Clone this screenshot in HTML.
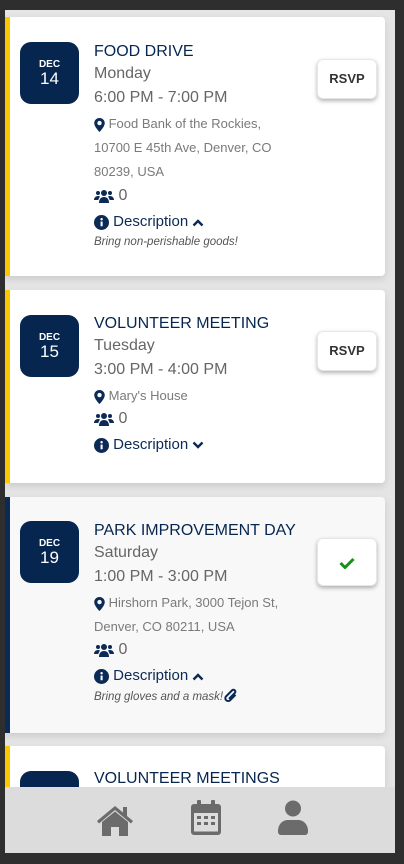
<!DOCTYPE html>
<html><head><meta charset="utf-8"><style>
*{margin:0;padding:0;box-sizing:border-box}
body{width:404px;height:864px;background:#2e2e2e;font-family:"Liberation Sans",sans-serif;position:relative;overflow:hidden}
#app{position:absolute;left:5px;top:10px;width:390px;height:843px;background:#e5e5e5;overflow:hidden}
.card{position:absolute;left:0;width:380px;background:#fff;border-radius:0 4px 4px 0;border-left:5px solid #fcc800;box-shadow:0 3px 8px rgba(0,0,0,.12)}
.card.navy{border-left-color:#0b2a55;background:#f8f8f8}
.date{position:absolute;left:10px;width:59px;height:62px;background:#062650;border-radius:11px;color:#fff;text-align:center}
.date .m{position:absolute;top:17px;width:100%;font-size:10px;font-weight:bold}
.date .d{position:absolute;top:27px;width:100%;font-size:17px}
.t{position:absolute;left:84px;white-space:nowrap;line-height:20px}
.title{font-size:16px;color:#062650}
.day,.time{font-size:16px;color:#666}
.addr{font-size:13px;color:#7a7a7a}
.cnt{font-size:16px;color:#666}
.desc{font-size:15px;color:#0b2a55}
.note{font-size:11.5px;font-style:italic;color:#555}
.btn{position:absolute;left:307px;width:60px;background:#fff;border-radius:6px;box-shadow:0 2px 4px rgba(0,0,0,.3);border:1px solid #e6e6e6;text-align:center;font-weight:bold;font-size:13px;color:#333}
svg{vertical-align:middle}
#nav{position:absolute;left:0;top:777px;width:390px;height:66px;background:#dcdcdc}
</style></head><body><div id="app">

<div class="card" style="top:7px;height:259px">
 <div class="date" style="top:25px"><div class="m">DEC</div><div class="d">14</div></div>
 <div class="t title" style="top:25px">FOOD DRIVE</div>
 <div class="t day" style="top:47px">Monday</div>
 <div class="t time" style="top:71px">6:00 PM - 7:00 PM</div>
 <div class="t addr" style="top:97px"><svg width="11" height="14" viewBox="0 0 12 16"><path d="M6 0C2.7 0 0 2.6 0 5.8 0 10 6 16 6 16s6-6 6-10.2C12 2.6 9.3 0 6 0zm0 8.3A2.5 2.5 0 1 1 6 3.3a2.5 2.5 0 0 1 0 5z" fill="#0b2a55"/></svg> Food Bank of the Rockies,</div>
 <div class="t addr" style="top:121px">10700 E 45th Ave, Denver, CO</div>
 <div class="t addr" style="top:145px">80239, USA</div>
 <div class="t cnt" style="top:169px"><svg width="20" height="14" viewBox="0 0 20 14" fill="#0b2a55"><circle cx="10" cy="4" r="3"/><circle cx="4" cy="4" r="2"/><circle cx="16" cy="4" r="2"/><path d="M5 14c0-4 2-6 5-6s5 2 5 6z"/><path d="M0 11c0-2 1.5-4 4-4 1 0 1.5.3 2 .7C5 9 4.5 10 4.3 11z"/><path d="M20 11c0-2-1.5-4-4-4-1 0-1.5.3-2 .7 1 1.3 1.5 2.3 1.7 3.3z"/></svg> 0</div>
 <div class="t desc" style="top:195px"><svg width="15" height="15" viewBox="0 0 16 16"><circle cx="8" cy="8" r="8" fill="#0b2a55"/><rect x="7" y="7" width="2.2" height="5" fill="#fff"/><circle cx="8.1" cy="4.5" r="1.3" fill="#fff"/></svg> Description <svg width="12" height="9" viewBox="0 0 12 9"><path d="M1.5 7.5L6 3l4.5 4.5" stroke="#0b2a55" stroke-width="2.4" fill="none"/></svg></div>
 <div class="t note" style="top:215px">Bring non-perishable goods!</div>
 <div class="btn" style="top:42px;height:40px;line-height:38px">RSVP</div>
</div>

<div class="card" style="top:280px;height:193px">
 <div class="date" style="top:25px"><div class="m">DEC</div><div class="d">15</div></div>
 <div class="t title" style="top:24px">VOLUNTEER MEETING</div>
 <div class="t day" style="top:46px">Tuesday</div>
 <div class="t time" style="top:70px">3:00 PM - 4:00 PM</div>
 <div class="t addr" style="top:96px"><svg width="11" height="14" viewBox="0 0 12 16"><path d="M6 0C2.7 0 0 2.6 0 5.8 0 10 6 16 6 16s6-6 6-10.2C12 2.6 9.3 0 6 0zm0 8.3A2.5 2.5 0 1 1 6 3.3a2.5 2.5 0 0 1 0 5z" fill="#0b2a55"/></svg> Mary's House</div>
 <div class="t cnt" style="top:119px"><svg width="20" height="14" viewBox="0 0 20 14" fill="#0b2a55"><circle cx="10" cy="4" r="3"/><circle cx="4" cy="4" r="2"/><circle cx="16" cy="4" r="2"/><path d="M5 14c0-4 2-6 5-6s5 2 5 6z"/><path d="M0 11c0-2 1.5-4 4-4 1 0 1.5.3 2 .7C5 9 4.5 10 4.3 11z"/><path d="M20 11c0-2-1.5-4-4-4-1 0-1.5.3-2 .7 1 1.3 1.5 2.3 1.7 3.3z"/></svg> 0</div>
 <div class="t desc" style="top:145px"><svg width="15" height="15" viewBox="0 0 16 16"><circle cx="8" cy="8" r="8" fill="#0b2a55"/><rect x="7" y="7" width="2.2" height="5" fill="#fff"/><circle cx="8.1" cy="4.5" r="1.3" fill="#fff"/></svg> Description <svg width="12" height="9" viewBox="0 0 12 9"><path d="M1.5 1.5L6 6l4.5-4.5" stroke="#0b2a55" stroke-width="2.4" fill="none"/></svg></div>
 <div class="btn" style="top:41px;height:40px;line-height:38px">RSVP</div>
</div>

<div class="card navy" style="top:487px;height:236px">
 <div class="date" style="top:24px"><div class="m">DEC</div><div class="d">19</div></div>
 <div class="t title" style="top:24px">PARK IMPROVEMENT DAY</div>
 <div class="t day" style="top:46px">Saturday</div>
 <div class="t time" style="top:70px">1:00 PM - 3:00 PM</div>
 <div class="t addr" style="top:96px"><svg width="11" height="14" viewBox="0 0 12 16"><path d="M6 0C2.7 0 0 2.6 0 5.8 0 10 6 16 6 16s6-6 6-10.2C12 2.6 9.3 0 6 0zm0 8.3A2.5 2.5 0 1 1 6 3.3a2.5 2.5 0 0 1 0 5z" fill="#0b2a55"/></svg> Hirshorn Park, 3000 Tejon St,</div>
 <div class="t addr" style="top:120px">Denver, CO 80211, USA</div>
 <div class="t cnt" style="top:143px"><svg width="20" height="14" viewBox="0 0 20 14" fill="#0b2a55"><circle cx="10" cy="4" r="3"/><circle cx="4" cy="4" r="2"/><circle cx="16" cy="4" r="2"/><path d="M5 14c0-4 2-6 5-6s5 2 5 6z"/><path d="M0 11c0-2 1.5-4 4-4 1 0 1.5.3 2 .7C5 9 4.5 10 4.3 11z"/><path d="M20 11c0-2-1.5-4-4-4-1 0-1.5.3-2 .7 1 1.3 1.5 2.3 1.7 3.3z"/></svg> 0</div>
 <div class="t desc" style="top:169px"><svg width="15" height="15" viewBox="0 0 16 16"><circle cx="8" cy="8" r="8" fill="#0b2a55"/><rect x="7" y="7" width="2.2" height="5" fill="#fff"/><circle cx="8.1" cy="4.5" r="1.3" fill="#fff"/></svg> Description <svg width="12" height="9" viewBox="0 0 12 9"><path d="M1.5 7.5L6 3l4.5 4.5" stroke="#0b2a55" stroke-width="2.4" fill="none"/></svg></div>
 <div class="t note" style="top:190px">Bring gloves and a mask!<svg width="16" height="17" viewBox="0 0 14 15"><path d="M11 6L6 11a2.5 2.5 0 0 1-3.5-3.5L8 2a1.7 1.7 0 0 1 2.4 2.4L5.2 9.6" stroke="#0b2a55" stroke-width="1.8" fill="none"/></svg></div>
 <div class="btn" style="top:41px;height:48px;line-height:46px"><svg width="16" height="12" viewBox="0 0 16 12"><path d="M1.5 6l4.5 4.5L14.5 2" stroke="#1a8f1a" stroke-width="3" fill="none"/></svg></div>
</div>

<div class="card" style="top:736px;height:120px">
 <div class="date" style="top:25px"></div>
 <div class="t title" style="top:23px">VOLUNTEER MEETINGS</div>
</div>

<div id="nav">
 <svg style="position:absolute;left:91px;top:16px" width="38" height="33" viewBox="0 0 38 33" fill="#6b6b6b"><path d="M19 3L1 18l2 2.5L19 7l16 13.5 2-2.5-6-5V4h-4v5.5z"/><path d="M6 19L19 8.5 32 19v14H23v-9h-8v9H6z"/></svg>
 <svg style="position:absolute;left:186px;top:13px" width="30" height="35" viewBox="0 0 30 35" fill="#6b6b6b"><rect x="6" y="0" width="4" height="6" rx="1"/><rect x="20" y="0" width="4" height="6" rx="1"/><path d="M3 4h24a3 3 0 0 1 3 3v25a3 3 0 0 1-3 3H3a3 3 0 0 1-3-3V7a3 3 0 0 1 3-3zm0 9v18.5h24V13z"/><rect x="6" y="16" width="4" height="3"/><rect x="13" y="16" width="4" height="3"/><rect x="20" y="16" width="4" height="3"/><rect x="6" y="22" width="4" height="3"/><rect x="13" y="22" width="4" height="3"/><rect x="20" y="22" width="4" height="3"/></svg>
 <svg style="position:absolute;left:273px;top:13px" width="30" height="35" viewBox="0 0 30 35" fill="#6b6b6b"><circle cx="15" cy="8.5" r="8"/><path d="M0 31c0-6 4-11 10-11h10c6 0 10 5 10 11v1a3 3 0 0 1-3 3H3a3 3 0 0 1-3-3z"/></svg>
</div>
</div></body></html>
